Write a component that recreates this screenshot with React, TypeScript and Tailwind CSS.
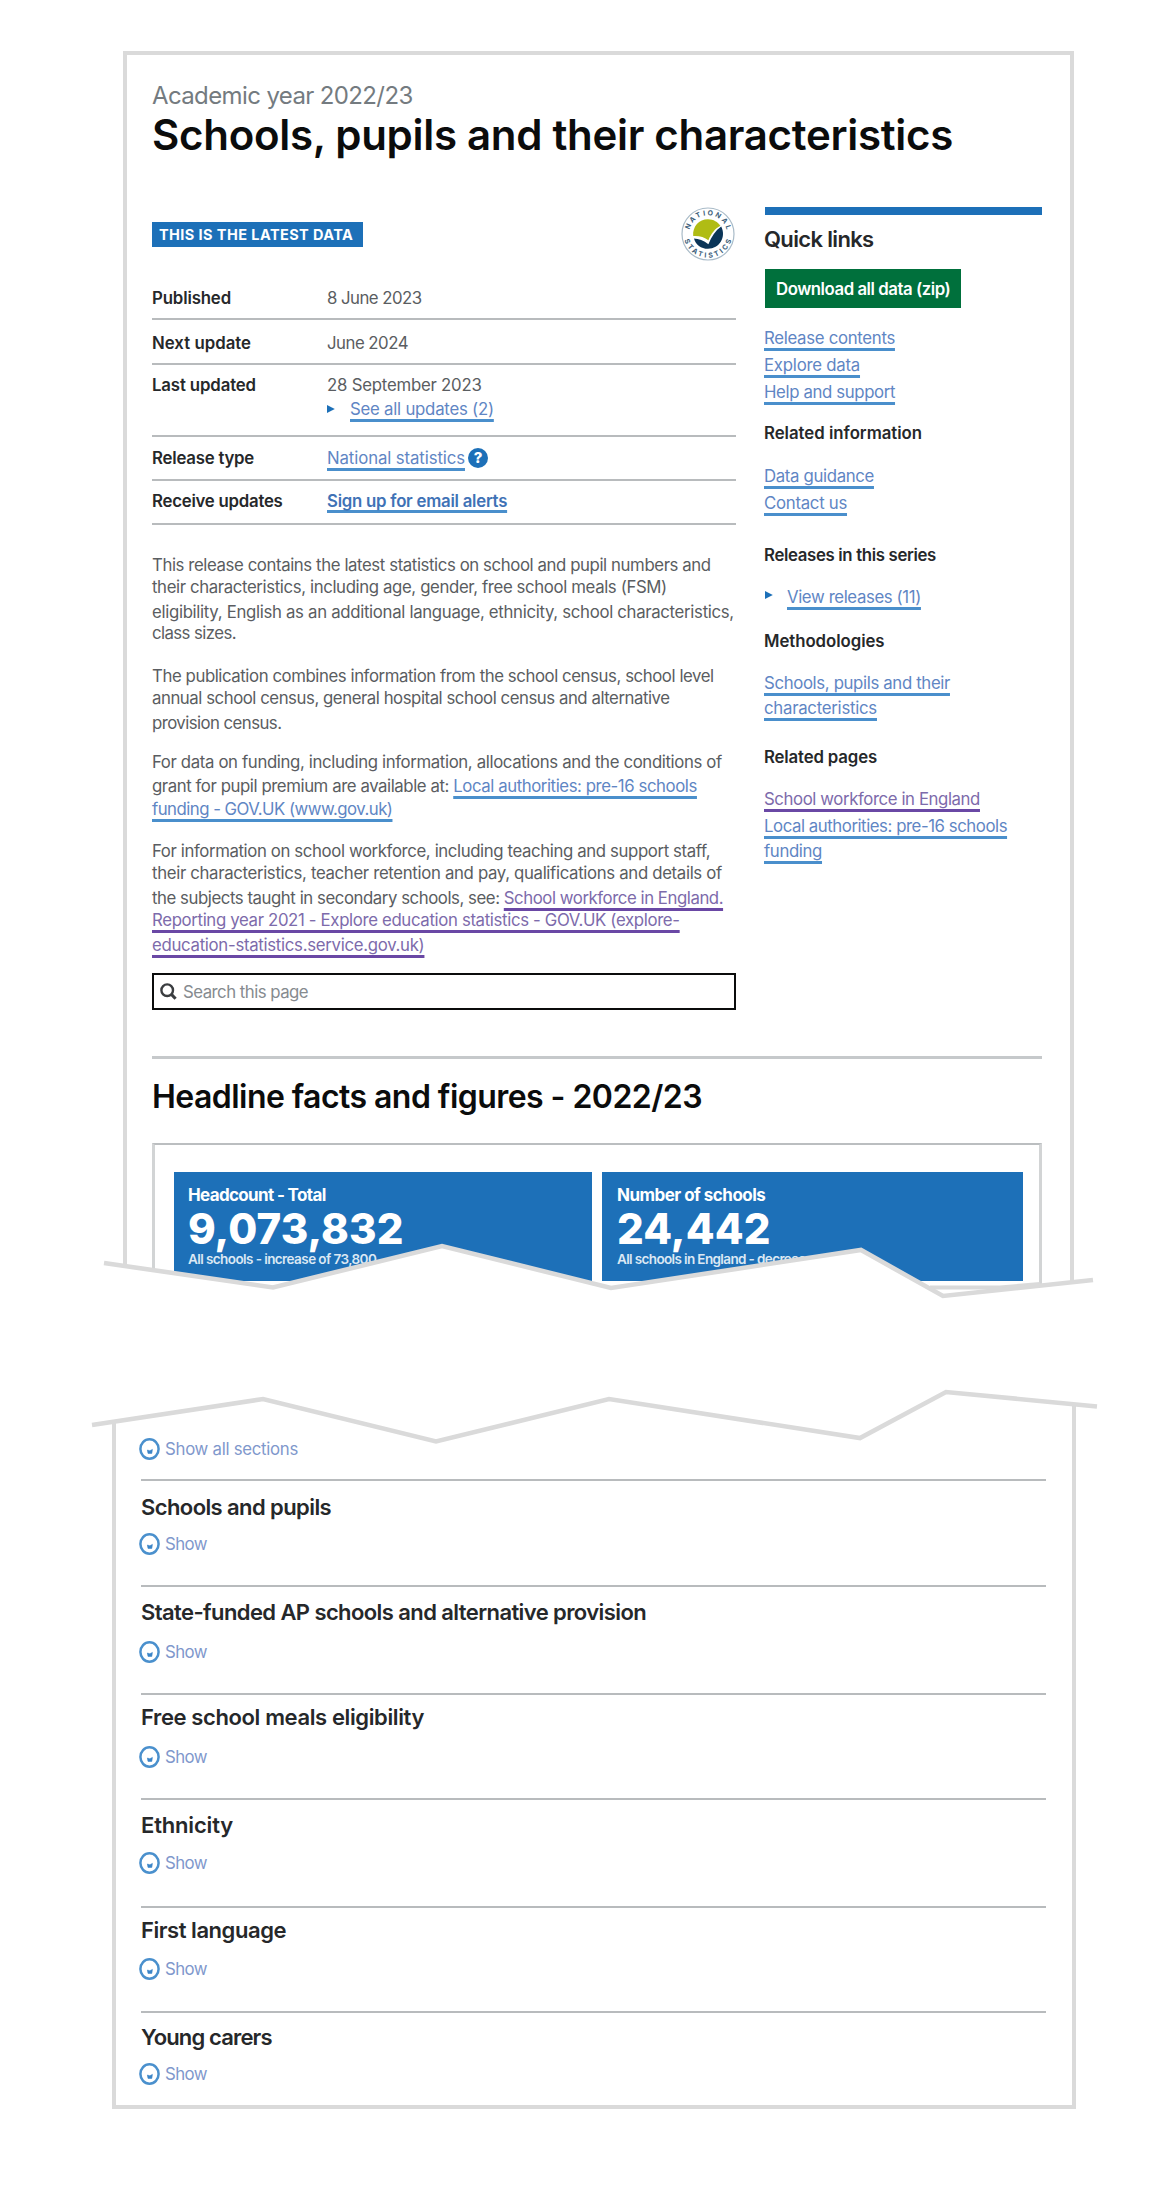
import React from "react";

const link = "text-[#5f86c4] underline decoration-[#4a8fcc] decoration-[2.5px] underline-offset-[3.5px] [text-decoration-skip-ink:none]";
const visited = "text-[#7d6bab] underline decoration-[#6a48a5] decoration-[2.5px] underline-offset-[3.5px] [text-decoration-skip-ink:none]";

type Line = { h: string; track: string; text: string; link?: string; kind?: string };

const body: Line[] = [
  { h: "h-[22px]", track: "tracking-[-0.41px]", text: "This release contains the latest statistics on school and pupil numbers and" },
  { h: "h-[25px]", track: "tracking-[-0.38px]", text: "their characteristics, including age, gender, free school meals (FSM)" },
  { h: "h-[21px]", track: "tracking-[-0.32px]", text: "eligibility, English as an additional language, ethnicity, school characteristics," },
  { h: "h-[43px]", track: "tracking-[-0.58px]", text: "class sizes." },
  { h: "h-[22px]", track: "tracking-[-0.43px]", text: "The publication combines information from the school census, school level" },
  { h: "h-[25px]", track: "tracking-[-0.46px]", text: "annual school census, general hospital school census and alternative" },
  { h: "h-[39px]", track: "tracking-[-0.56px]", text: "provision census." },
  { h: "h-[24px]", track: "tracking-[-0.37px]", text: "For data on funding, including information, allocations and the conditions of" },
  { h: "h-[23px]", track: "tracking-[-0.43px]", text: "grant for pupil premium are available at: ", link: "Local authorities: pre-16 schools", kind: link },
  { h: "h-[42px]", track: "tracking-[-0.52px]", text: "", link: "funding - GOV.UK (www.gov.uk)", kind: link },
  { h: "h-[22px]", track: "tracking-[-0.39px]", text: "For information on school workforce, including teaching and support staff," },
  { h: "h-[25px]", track: "tracking-[-0.34px]", text: "their characteristics, teacher retention and pay, qualifications and details of" },
  { h: "h-[22px]", track: "tracking-[-0.45px]", text: "the subjects taught in secondary schools, see: ", link: "School workforce in England.", kind: visited },
  { h: "h-[25px]", track: "tracking-[-0.35px]", text: "", link: "Reporting year 2021 - Explore education statistics - GOV.UK (explore-", kind: visited },
  { h: "h-[40px]", track: "tracking-[-0.3px]", text: "", link: "education-statistics.service.gov.uk)", kind: visited },
];

const sections = [
  { title: "Schools and pupils", box: "h-[106px] pt-[12px]", track: "tracking-[-0.59px]", gap: "mt-[12px]" },
  { title: "State-funded AP schools and alternative provision", box: "h-[108px] pt-[11px]", track: "tracking-[-0.59px]", gap: "mt-[15px]" },
  { title: "Free school meals eligibility", box: "h-[105px] pt-[8px]", track: "tracking-[-0.38px]", gap: "mt-[15px]" },
  { title: "Ethnicity", box: "h-[108px] pt-[11px]", track: "tracking-[-0.18px]", gap: "mt-[13px]" },
  { title: "First language", box: "h-[105px] pt-[8px]", track: "tracking-[-0.45px]", gap: "mt-[14px]" },
  { title: "Young carers", box: "pt-[10px]", track: "tracking-[-0.85px]", gap: "mt-[12px]" },
];

function Badge() {
  return (
    <svg viewBox="0 0 54 54" className="h-[54px] w-[54px]">
      <defs>
        <path id="arc-top" d="M8.2 30 A19 19 0 1 1 45.8 30" />
        <path id="arc-bottom" d="M2.6 24 A24.5 24.5 0 1 0 51.4 24" />
      </defs>
      <circle cx="27" cy="27" r="26" fill="#fff" stroke="#a9bbc8" strokeWidth="1.2" />
      <g fontFamily="Inter, sans-serif" fontSize="7" fontWeight="700" fill="#3d5f7b" textAnchor="middle">
        <text letterSpacing="2"><textPath href="#arc-top" startOffset="51.5%">NATIONAL</textPath></text>
        <text letterSpacing="2.4"><textPath href="#arc-bottom" startOffset="51.5%">STATISTICS</textPath></text>
      </g>
      <path d="M12.2 29 C11.4 19.5 18 12.2 27 12.2 C32.5 12.2 37 15 39.4 18.8 C34 21.5 30 27 27.4 33.2 C23.5 30 18 28.6 12.2 29 Z" fill="#b0bc14" />
      <path d="M13 31.4 C17.5 31.5 22.8 33.2 27.4 37.2 C30.5 29.5 34.5 23.6 40.2 19.6 C45.6 30 38.5 41.8 27 41.8 C20 41.8 14.6 37.4 13 31.4 Z" fill="#0b3558" />
    </svg>
  );
}

function Toggle({ label, track }: { label: string; track: string }) {
  return (
    <div className="-ml-[2px] flex h-[22px] items-center gap-[5px]">
      <svg viewBox="0 0 21 22" preserveAspectRatio="none" className="h-[22px] w-[21px] shrink-0">
        <ellipse cx="10.5" cy="11" rx="9.1" ry="9.7" fill="#fff" stroke="#4a90cd" strokeWidth="2.5" />
        <path d="M8.4 12 L10.8 12.8 L13.4 11.4 L12.8 15.4 L9 15.4 Z" fill="#3b85c7" stroke="#3b85c7" strokeWidth="0.6" />
      </svg>
      <span className={`leading-[22px] text-[#7f98cc] ${track}`}>{label}</span>
    </div>
  );
}

function Triangle() {
  return (
    <svg viewBox="0 0 8 8" className="h-[8px] w-[8px] shrink-0">
      <path d="M0 0 L7.8 4 L0 8 Z" fill="#1d70b8" />
    </svg>
  );
}

function Row({ label, track, box, children }: { label: string; track: string; box: string; children: React.ReactNode }) {
  return (
    <div className={`flex border-b-2 border-[#b8bbbd] ${box}`}>
      <div className={`w-[175px] shrink-0 font-semibold text-[#26282a] ${track}`}>{label}</div>
      <div>{children}</div>
    </div>
  );
}

export default function App() {
  return (
    <div className="relative h-[2208px] w-[1176px] overflow-hidden bg-white pt-[51px] font-['Inter',sans-serif] text-[16.8px] leading-[24px] whitespace-nowrap text-[#5a5d61]">
      <div className="ml-[123px] h-[1245px] w-[951px] border-4 border-b-0 border-[#dadada] pt-[26px] pr-[28px] pl-[25px]">
        <div className="text-[24px] leading-[30px] tracking-[-0.62px] text-[#747b80]">Academic year 2022/23</div>
        <h1 className="text-[42px] leading-[48px] font-semibold tracking-[-0.29px] text-[#0b0c0c]">Schools, pupils and their characteristics</h1>

        <div className="mt-[48px] flex gap-[28px]">
          <div className="w-[584px]">
            <div className="flex h-[54px] items-start justify-between">
              <div className="mt-[15px] flex h-[25px] w-[211px] items-center bg-[#1d70b8] pl-[7px] text-[14.5px] font-bold tracking-[0.42px] text-white">THIS IS THE LATEST DATA</div>
              <div className="-ml-[1px] mr-[1px]"><Badge /></div>
            </div>
            <Row label="Published" track="tracking-[-0.14px]" box="h-[59px] pt-[25px]">
              <span className="tracking-[-0.54px]">8 June 2023</span>
            </Row>
            <Row label="Next update" track="tracking-[0.02px]" box="h-[45px] pt-[11px]">
              <span className="tracking-[-0.51px]">June 2024</span>
            </Row>
            <Row label="Last updated" track="tracking-[-0.13px]" box="h-[72px] pt-[8px]">
              <div className="tracking-[-0.23px]">28 September 2023</div>
              <div className="flex items-center gap-[15px]">
                <Triangle />
                <a className={`tracking-[-0.24px] ${link}`}>See all updates (2)</a>
              </div>
            </Row>
            <Row label="Release type" track="tracking-[-0.22px]" box="h-[44px] pt-[9px]">
              <div className="flex items-center gap-[3px]">
                <a className={`tracking-[-0.11px] ${link}`}>National statistics</a>
                <span className="flex h-[20px] w-[20px] items-center justify-center rounded-full bg-[#1d70b8] text-[15px] font-extrabold text-white">?</span>
              </div>
            </Row>
            <Row label="Receive updates" track="tracking-[-0.24px]" box="h-[44px] pt-[8px]">
              <a className="font-semibold tracking-[-0.25px] text-[#3f72b6] underline decoration-[#4a8fcc] decoration-[2.5px] underline-offset-[3px] [text-decoration-skip-ink:none]">Sign up for email alerts</a>
            </Row>

            <div className="mt-[28px]">
              {body.map((l, i) => (
                <div key={i} className={`${l.h} ${l.track}`}>
                  {l.text}
                  {l.link && <a className={l.kind}>{l.link}</a>}
                </div>
              ))}
            </div>

            <div className="flex h-[37px] items-center gap-[6px] border-2 border-[#0b0c0c] pl-[6px]">
              <svg viewBox="0 0 17 17" className="h-[17px] w-[17px]" fill="none" stroke="#3a3d40">
                <circle cx="7.2" cy="7.2" r="5.8" strokeWidth="2.4" />
                <path d="M11.4 11.4 L15.6 15.8" strokeWidth="3" />
              </svg>
              <span className="tracking-[-0.52px] text-[#868b8f]">Search this page</span>
            </div>
          </div>

          <aside className="w-[278px]">
            <div className="ml-[1px] h-[8px] bg-[#1d70b8]" />
            <h2 className="mt-[10px] text-[22px] leading-[28px] font-semibold tracking-[-0.65px] text-[#26282a]">Quick links</h2>
            <div className="mt-[16px] ml-[1px] flex h-[39px] w-[196px] items-center bg-[#00703c] pl-[11px] font-semibold tracking-[-0.46px] text-white">Download all data (zip)</div>
            <div className="mt-[18px] h-[27px]"><a className={`tracking-[-0.31px] ${link}`}>Release contents</a></div>
            <div className="h-[27px]"><a className={`tracking-[-0.24px] ${link}`}>Explore data</a></div>
            <div className="h-[41px]"><a className={`tracking-[-0.38px] ${link}`}>Help and support</a></div>
            <h3 className="h-[43px] font-semibold tracking-[-0.02px] text-[#26282a]">Related information</h3>
            <div className="h-[27px]"><a className={`tracking-[-0.35px] ${link}`}>Data guidance</a></div>
            <div className="h-[52px]"><a className={`tracking-[-0.28px] ${link}`}>Contact us</a></div>
            <h3 className="h-[42px] font-semibold tracking-[-0.34px] text-[#26282a]">Releases in this series</h3>
            <div className="flex h-[44px] items-start gap-[14px]">
              <span className="mt-[6px] ml-[1px]"><Triangle /></span>
              <a className={`tracking-[-0.39px] ${link}`}>View releases (11)</a>
            </div>
            <h3 className="h-[42px] font-semibold tracking-[-0.05px] text-[#26282a]">Methodologies</h3>
            <div className="h-[25px]"><a className={`tracking-[-0.36px] ${link}`}>Schools, pupils and their</a></div>
            <div className="h-[49px]"><a className={`tracking-[-0.26px] ${link}`}>characteristics</a></div>
            <h3 className="h-[42px] font-semibold tracking-[-0.15px] text-[#26282a]">Related pages</h3>
            <div className="h-[27px]"><a className={`tracking-[-0.41px] ${visited}`}>School workforce in England</a></div>
            <div className="h-[25px]"><a className={`tracking-[-0.45px] ${link}`}>Local authorities: pre-16 schools</a></div>
            <div className="h-[24px]"><a className={`tracking-[-0.37px] ${link}`}>funding</a></div>
          </aside>
        </div>

        <div className="mt-[46px] h-[3px] bg-[#c6c9cb]" />
        <h2 className="mt-[18px] text-[32px] leading-[40px] font-semibold tracking-[-0.55px] text-[#0b0c0c]">Headline facts and figures - 2022/23</h2>

        <div className="mt-[26px] flex h-[150px] gap-[10px] border-x-[3px] border-t-2 border-x-[#d2d4d5] border-t-[#bbbec0] pt-[27px] pl-[19px]">
          <div className="h-[109px] w-[418px] bg-[#1d70b8] pt-[11px] pl-[14px] text-white">
            <div className="text-[17px] font-bold tracking-[-0.65px]">Headcount - Total</div>
            <div className="text-[42px] leading-[44px] font-extrabold tracking-[0.1px]">9,073,832</div>
            <div className="text-[13.5px] leading-[16px] font-semibold tracking-[-0.58px] text-[#dbe8f4]">All schools - increase of 73,800</div>
          </div>
          <div className="h-[109px] w-[421px] bg-[#1d70b8] pt-[11px] pl-[15px] text-white">
            <div className="text-[17px] font-bold tracking-[-0.52px]">Number of schools</div>
            <div className="text-[42px] leading-[44px] font-extrabold tracking-[0.1px]">24,442</div>
            <div className="text-[13.5px] leading-[16px] font-semibold tracking-[-0.63px] text-[#dbe8f4]">All schools in England - decrease</div>
          </div>
        </div>
      </div>

      <div className="mt-[104px] ml-[112px] h-[709px] w-[964px] border-4 border-t-0 border-[#dadada] pt-[38px] pr-[28px] pl-[25px]">
        <Toggle label="Show all sections" track="tracking-[-0.28px]" />
        <div className="mt-[19px] -mr-[2px]">
          {sections.map((s) => (
            <div key={s.title} className={`border-t-2 border-[#b8bbbd] ${s.box}`}>
              <h3 className={`text-[22px] leading-[28px] font-semibold text-[#26282a] ${s.track}`}>{s.title}</h3>
              <div className={s.gap}>
                <Toggle label="Show" track="tracking-[-0.55px]" />
              </div>
            </div>
          ))}
        </div>
      </div>

      {/* Torn paper edges drawn over both sheets */}
      <svg viewBox="0 1230 1176 220" className="absolute top-[1230px] left-0 h-[220px] w-[1176px]" fill="none">
        <path d="M104 1263 L273 1287.5 L442 1246 L611 1288 L861 1250 L943 1296 L1093 1280 L1097 1406 L946 1392 L860 1438 L609 1399 L436 1441.5 L263 1399 L92 1425 Z" fill="#fff" />
        <path d="M930 1287.5 L1000 1287.5 L1040 1284" stroke="#dadada" strokeWidth="4" />
        <path d="M104 1263 L273 1287.5 L442 1246 L611 1288 L861 1250 L943 1296 L1093 1280" stroke="#dadada" strokeWidth="4.6" />
        <path d="M92 1425 L263 1399 L436 1441.5 L609 1399 L860 1438 L946 1392 L1097 1406.5" stroke="#dadada" strokeWidth="4.6" />
      </svg>
    </div>
  );
}
